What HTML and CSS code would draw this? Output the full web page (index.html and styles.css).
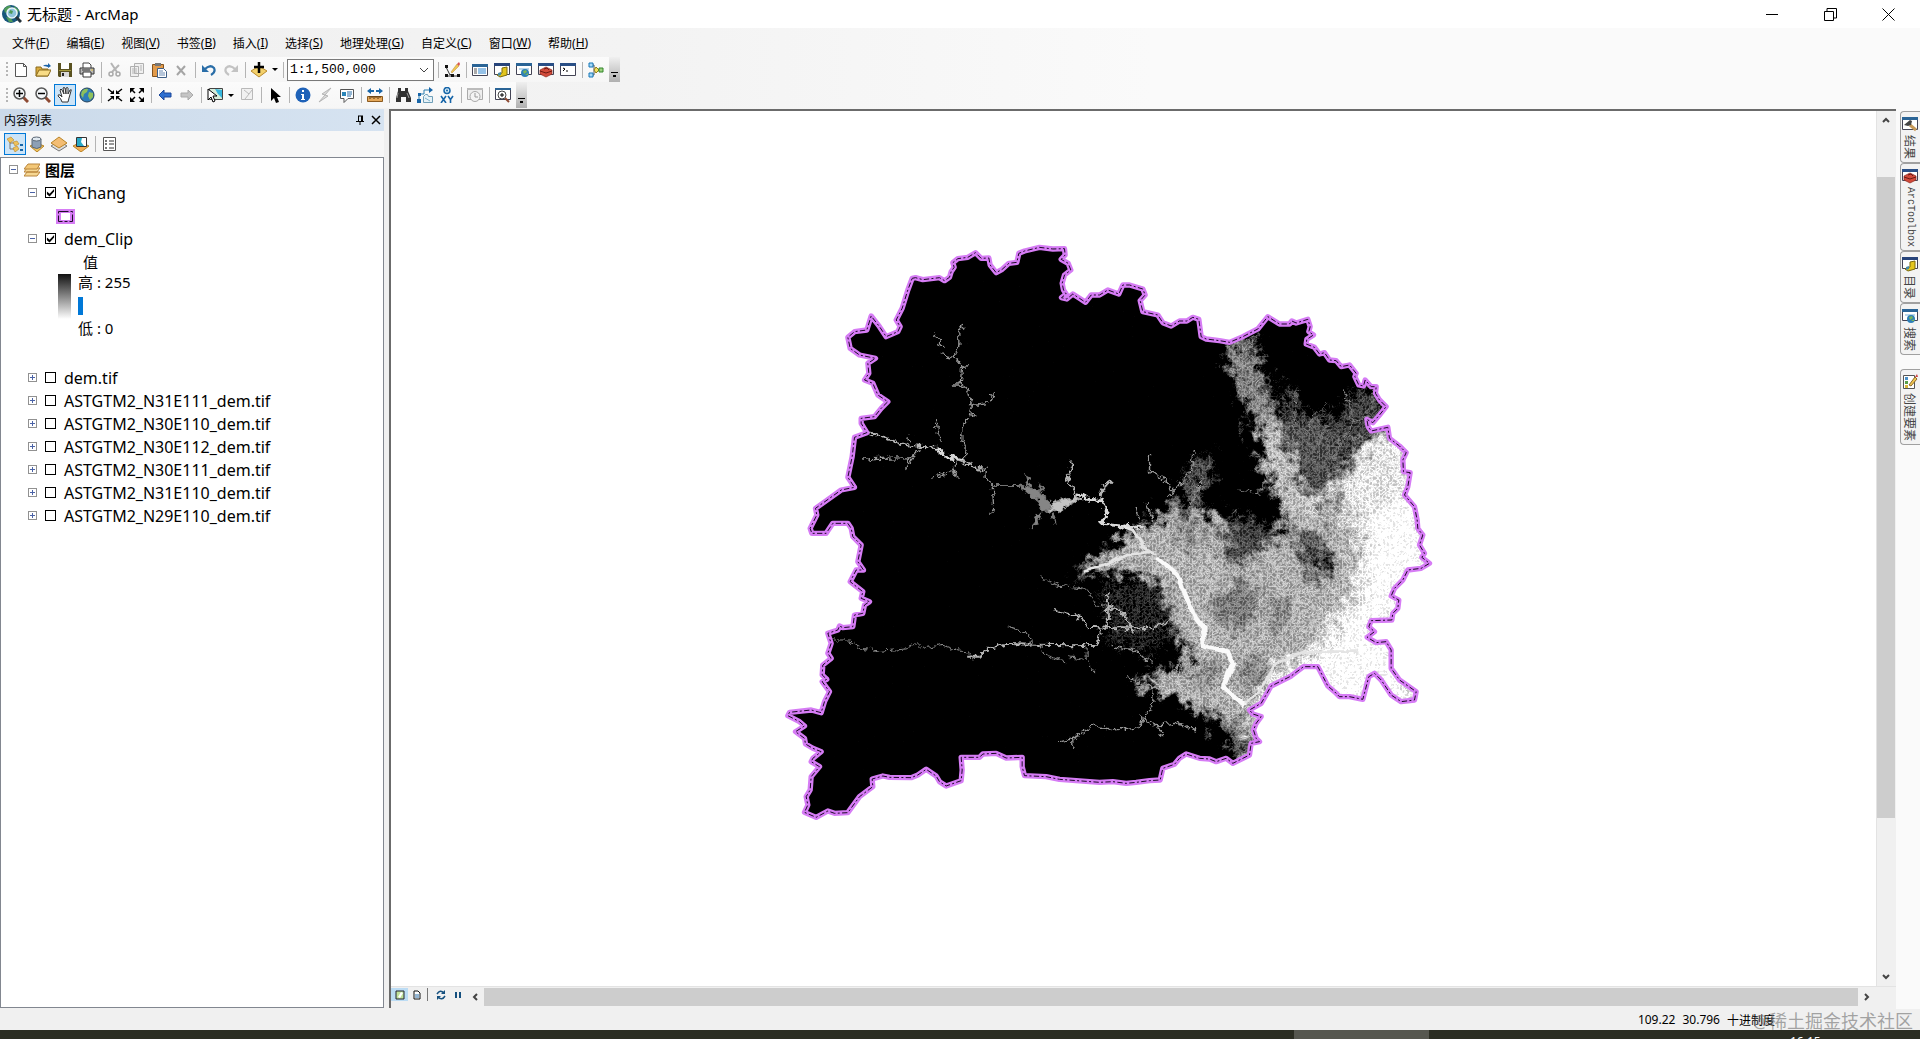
FILE: index.html
```html
<!DOCTYPE html>
<html lang="zh-CN">
<head>
  <meta charset="UTF-8">
  <meta name="viewport" content="width=device-width, initial-scale=1.0">
  <title>无标题 - ArcMap</title>
  <link rel="stylesheet" href="styles.css">
</head>
<body>

  <!-- 图标库 -->
  <svg class="icon-defs" aria-hidden="true">
    <symbol id="i-logo" viewBox="0 0 20 20">
      <circle cx="9" cy="10" r="9" fill="#17567c"/>
      <path d="M2 5Q5 1 9 2L7 6 3 9zM12 2l5 4-2 5-3-3zM4 13l5 1 2 4-4 0z" fill="#4f9a58"/>
      <circle cx="10" cy="9" r="5" fill="#8fc4dc" stroke="#e9f3f8" stroke-width="1.500"/>
      <path d="M8 6l3 1-1 3-3-1z" fill="#4f9a58"/>
      <path d="M14 13l5 5" stroke="#27343c" stroke-width="3"/>
    </symbol>
    <symbol id="i-new" viewBox="0 0 16 16"><path d="M2.500 1.500h8l3 3v10h-11z" fill="#fff" stroke="#555"/><path d="M10.500 1.500v3h3" fill="none" stroke="#555"/></symbol>
    <symbol id="i-open" viewBox="0 0 16 16"><path d="M1 14V5h5l1 2h6v7z" fill="#d9ab3f" stroke="#8a6a1c"/><path d="M1 14l3-6h12l-3 6z" fill="#f8dc86" stroke="#8a6a1c"/><path d="M8 4q2-2 5-1V1l3 3-3 2V5Q10 4 8 4z" fill="#1c63a8"/></symbol>
    <symbol id="i-save" viewBox="0 0 16 16"><path d="M1 1h14v14H2l-1-1z" fill="#5a5220"/><path d="M4 1h8v6H4z" fill="#fff"/><path d="M2 8h12v1H2z" fill="#a39a3f"/><path d="M4 10h8v5H4z" fill="#d8d8d8"/><path d="M5 11h2v3H5z" fill="#222"/></symbol>
    <symbol id="i-print" viewBox="0 0 16 16"><path d="M4 6V1h6l2 2v3" fill="#fff" stroke="#444"/><path d="M1 6h14v6H1z" fill="#b9b9b9" stroke="#333"/><path d="M4 10h8v5H4z" fill="#fff" stroke="#333"/><path d="M3 8h8" stroke="#333"/><path d="M12 8h2" stroke="#e4c23a"/></symbol>
    <symbol id="i-cut" viewBox="0 0 16 16"><path d="M4 1l6 9M12 3L5 10" stroke="#b5b5b5" stroke-width="2"/><circle cx="4" cy="12" r="2" fill="none" stroke="#aaa" stroke-width="1.500"/><circle cx="11" cy="12" r="2" fill="none" stroke="#aaa" stroke-width="1.500"/></symbol>
    <symbol id="i-copy" viewBox="0 0 16 16"><path d="M5.500 1.500h9v10h-9zM1.500 4.500h8v10h-8z" fill="#f0f0f0" stroke="#b0b0b0"/><path d="M3 7h5M3 9h5M3 11h5M11 4h2M11 6h2M11 8h2" stroke="#b5b5b5"/></symbol>
    <symbol id="i-paste" viewBox="0 0 16 16"><path d="M1.500 2.500h11v12h-11z" fill="#e29b4b" stroke="#82521e"/><path d="M4 1h6v3H4z" fill="#777"/><path d="M6.500 6.500h6l3 3v6h-9z" fill="#fff" stroke="#3f5f87"/><path d="M8 9h4M8 11h6M8 13h6" stroke="#6d8cb4"/></symbol>
    <symbol id="i-delete" viewBox="0 0 16 16"><path d="M4 4l8 9M12 4l-8 9" stroke="#a5a5a5" stroke-width="2"/></symbol>
    <symbol id="i-undo" viewBox="0 0 16 16"><path d="M4 7q5-5 9-1 2 4-3 7" fill="none" stroke="#2a6ea8" stroke-width="2.200"/><path d="M1 3v7h7z" fill="#2a6ea8"/></symbol>
    <symbol id="i-redo" viewBox="0 0 16 16"><path d="M12 7Q7 2 3 6q-2 4 3 7" fill="none" stroke="#c3c3c3" stroke-width="2.200"/><path d="M15 3v7H8z" fill="#c3c3c3"/></symbol>
    <symbol id="i-add" viewBox="0 0 16 16"><path d="M0 9l8-5 8 5-8 6z" fill="#f3d06b" stroke="#b98a2c"/><path d="M8 0v11M3 5h10" stroke="#000" stroke-width="2.500"/></symbol>
    <symbol id="i-editor" viewBox="0 0 16 16"><path d="M2 5l4 8 1-1M2 14h12" stroke="#333" fill="none"/><path d="M1 3h3v3H1zM1 12h3v3H1zM7 12h3v3H7zM13 12h3v3h-3z" fill="#111"/><path d="M7 10l6-8 2 2-7 7z" fill="#f1c651" stroke="#b58a3b" stroke-width=".5"/><path d="M13 2l2-2 1 2-1 2z" fill="#d9534f"/></symbol>
    <symbol id="i-table" viewBox="0 0 16 16"><path d="M.5 2.500h15v11H.5z" fill="#fff" stroke="#445"/><path d="M0 2h16v3H0z" fill="#2a6496"/><path d="M2 7h3M2 9h3M2 11h3" stroke="#555"/><path d="M6 7h8M6 9h8M6 11h8" stroke="#2c85d0"/></symbol>
    <symbol id="i-catalog" viewBox="0 0 16 16"><path d="M.5 1.500h15v11H.5z" fill="#fff" stroke="#445"/><path d="M0 1h16v3H0z" fill="#27447b"/><path d="M8 6l5-1v8l-7 2-3-2 5-2z" fill="#e3c51d" stroke="#7c6b0c"/><path d="M4 11l3-1v3l-3 1z" fill="#4b8ca8"/></symbol>
    <symbol id="i-search" viewBox="0 0 16 16"><path d="M.5 1.500h15v11H.5z" fill="#fff" stroke="#445"/><path d="M0 1h16v3H0z" fill="#2a6496"/><path d="M3 6h10v2H3z" fill="#b9d7ea"/><circle cx="9" cy="11" r="4" fill="#2d7fb8"/><path d="M7 9l3-1 1 2-3 2zM9 13l3-2v2z" fill="#79b557"/></symbol>
    <symbol id="i-toolbox" viewBox="0 0 16 16"><path d="M.5 1.500h15v11H.5z" fill="#fff" stroke="#445"/><path d="M0 1h16v3H0z" fill="#2a4f86"/><path d="M2 8l6-3 6 3v4l-6 3-6-3z" fill="#d24a3a" stroke="#8c2a20" stroke-width=".7"/><path d="M2 9l6 2 6-2M6 7l3-1 2 2" stroke="#6e1a12" fill="none"/></symbol>
    <symbol id="i-python" viewBox="0 0 16 16"><path d="M.5 1.500h15v12H.5z" fill="#fff" stroke="#445"/><path d="M0 1h16v3H0z" fill="#2a4f86"/><path d="M3 6l2 1-2 2M6 9h2" stroke="#000" fill="none"/></symbol>
    <symbol id="i-model" viewBox="0 0 16 16"><path d="M3 3h3v10H3M6 8h6" stroke="#555" fill="none"/><path d="M1 1h4v4H1zM1 11h4v4H1z" fill="#a8d9f6" stroke="#1576b8"/><path d="M8 5l3 3-3 3-2-3z" fill="#f2df5e" stroke="#927f15"/><path d="M11 6h4v4h-4z" fill="#9bd27e" stroke="#33852a"/></symbol>
    <symbol id="i-zoomin" viewBox="0 0 16 16"><path d="M10 10l5 5" stroke="#8e4a33" stroke-width="3"/><circle cx="6.500" cy="6.500" r="5.500" fill="#f5f8fa" stroke="#555" stroke-width="1.500"/><path d="M6.500 3v7M3 6.500h7" stroke="#000" stroke-width="1.500"/></symbol>
    <symbol id="i-zoomout" viewBox="0 0 16 16"><path d="M10 10l5 5" stroke="#8e4a33" stroke-width="3"/><circle cx="6.500" cy="6.500" r="5.500" fill="#f5f8fa" stroke="#555" stroke-width="1.500"/><path d="M3 6.500h7" stroke="#000" stroke-width="1.500"/></symbol>
    <symbol id="i-hand" viewBox="0 0 16 16"><path d="M5 15Q4 11 1 9q0-2 2-1l2 2L3 3q1-2 2 0l2 4-1-6q1-1 2 0l1 6V1q2-1 2 0v6l2-4q2-1 1 1l-2 7-1 4z" fill="#fff" stroke="#333"/></symbol>
    <symbol id="i-globe" viewBox="0 0 16 16"><circle cx="8" cy="8" r="7" fill="#2e7cb8" stroke="#23405c"/><path d="M3 4q3-3 6-2l-1 3-3 2-1 4-2-3zM10 5l4 1v4l-3 3-2-4z" fill="#8ec05b"/></symbol>
    <symbol id="i-fixin" viewBox="0 0 16 16"><path d="M1 2l5 4M15 2l-5 4M1 14l5-4M15 14l-5-4" stroke="#000" stroke-width="1.500"/><path d="M7 3v4H3zM9 3v4h4zM7 13V9H3zM9 13V9h4z"/></symbol>
    <symbol id="i-fixout" viewBox="0 0 16 16"><path d="M2 2l4 4M14 2l-4 4M2 14l4-4M14 14l-4-4" stroke="#000" stroke-width="1.500"/><path d="M1 1h5L1 6zM15 1h-5l5 5zM1 15h5l-5-5zM15 15h-5l5-5z"/></symbol>
    <symbol id="i-back" viewBox="0 0 16 16"><path d="M2 8l5-5v3h7v4H7v3z" fill="#2e6fd0" stroke="#1b479a"/></symbol>
    <symbol id="i-forward" viewBox="0 0 16 16"><path d="M14 8L9 3v3H2v4h7v3z" fill="#c5c5c5" stroke="#aaa"/></symbol>
    <symbol id="i-select" viewBox="0 0 16 16"><path d="M2.500 1.500h13v11h-13z" fill="#d6ecd9" stroke="#444"/><path d="M8 2l7 1v8l-4-4z" fill="#35b6dd"/><path d="M1 2v11l3-3 2 5 2-1-2-5h4z" fill="#fff" stroke="#000"/></symbol>
    <symbol id="i-clear" viewBox="0 0 16 16"><path d="M2.500 1.500h11v11h-11z" fill="#f1f1f1" stroke="#b9b9b9"/><path d="M5 3l5 4-4 5M10 7l3-4" stroke="#bbb" fill="none"/></symbol>
    <symbol id="i-arrow" viewBox="0 0 16 16"><path d="M4 1v13l3-3 2 5 3-1-2-5h4z" fill="#000"/></symbol>
    <symbol id="i-info" viewBox="0 0 16 16"><circle cx="8" cy="8" r="7.500" fill="#1f62b8"/><path d="M7 3h2v2H7zM6 7h3v5h1v1H6v-1h1V8H6z" fill="#fff"/></symbol>
    <symbol id="i-flash" viewBox="0 0 16 16"><path d="M14 1L5 7l3 1-6 7 9-6-3-1z" fill="#ddd" stroke="#b5b5b5"/></symbol>
    <symbol id="i-popup" viewBox="0 0 16 16"><path d="M1.500 2.500h13v9H9l-4 4v-4H1.500z" fill="#fff" stroke="#555"/><path d="M3 5h4v4H3z" fill="#2a85b8"/><path d="M8 5h5M8 7h5M8 9h4" stroke="#2a6ea8"/></symbol>
    <symbol id="i-measure" viewBox="0 0 16 16"><path d="M0 4l4-3v2h3v2H4v2zM16 4l-4-3v2H9v2h3v2z" fill="#1765a8"/><path d="M.5 9.500h15v5H.5z" fill="#e5a85a" stroke="#8c5a1e"/><path d="M3 9v3M5 9v2M7 9v3M9 9v2M11 9v3M13 9v2" stroke="#50330e"/></symbol>
    <symbol id="i-find" viewBox="0 0 16 16"><path d="M3 1h3v3h4V1h3v3l3 7v4h-5v-5H6v5H1v-4l2-7z" fill="#333"/><path d="M3 6l-1 5M12 6l2 5" stroke="#999"/></symbol>
    <symbol id="i-route" viewBox="0 0 16 16"><path d="M2 13V7h5V3h6" stroke="#2a7fb0" fill="none"/><path d="M6.500 9.500l2-2h2l1 2h4v6h-9z" stroke="#6f9fb8" fill="#e6f2f8"/><path d="M12 0l4 3-4 3zM0 12h4v4H0zM1 6h3v3H1z" fill="#1765a8"/><path d="M8 11l5 3" stroke="#7fb3cf"/></symbol>
    <symbol id="i-goxy" viewBox="0 0 16 16"><circle cx="8" cy="3.500" r="3" fill="#d7ecf6" stroke="#1765a8" stroke-width="1.500"/><circle cx="8" cy="3.500" r="1" fill="#1765a8"/><path d="M2 9l5 7M7 9l-5 7M9 9l2.500 3.500M14 9l-2.500 3.500V16" stroke="#1765a8" stroke-width="1.600" fill="none"/></symbol>
    <symbol id="i-time" viewBox="0 0 16 16"><path d="M.5 1.500h15v11H.5z" fill="#eee" stroke="#aaa"/><path d="M0 1h16v2H0z" fill="#bbb"/><circle cx="8" cy="9.500" r="5" fill="#f4f4f4" stroke="#aaa"/><path d="M8 6v4h3" stroke="#999" fill="none"/></symbol>
    <symbol id="i-viewer" viewBox="0 0 16 16"><path d="M.5 1.500h15v11H.5z" fill="#fff" stroke="#445"/><path d="M0 1h16v2H0z" fill="#2a6496"/><path d="M10 11l4 4" stroke="#8e4a33" stroke-width="2"/><circle cx="7" cy="8" r="4" fill="#fff" stroke="#444"/><path d="M7 6v4M5 8h4" stroke="#000"/></symbol>
    <symbol id="i-bylist" viewBox="0 0 16 16"><path d="M3 4v9h6M3 7h5" stroke="#777" fill="none"/><path d="M0 3l4-2 3 3-4 3zM6 6l4-1 2 3-4 2zM6 12l4-2 2 3-4 3z" fill="#efc25b" stroke="#b88427" stroke-width=".6"/><path d="M13 9h3M13 14h3" stroke="#1765a8" stroke-width="2"/></symbol>
    <symbol id="i-bysource" viewBox="0 0 16 16"><path d="M1 10l7-3 7 3-7 6z" fill="#efc25b" stroke="#b88427"/><path d="M3 3v8q5 3 9 0V3z" fill="#8da0b5" stroke="#5b6876"/><ellipse cx="7.500" cy="3" rx="4.500" ry="2" fill="#dfe8f0" stroke="#5b6876"/></symbol>
    <symbol id="i-byvis" viewBox="0 0 16 16"><path d="M0 10l8-5 8 5-8 5z" fill="#ddd" stroke="#777"/><path d="M0 7l8-6 8 6-8 5z" fill="#f3bd74" stroke="#b88427"/></symbol>
    <symbol id="i-bysel" viewBox="0 0 16 16"><path d="M0 10l8-4 8 4-8 6z" fill="#f0ae55" stroke="#b88427"/><path d="M3.500 1.500h10v9h-10z" fill="#fff" stroke="#333"/><path d="M4 2h5l-1 4 3 4H4z" fill="#28a9c6"/></symbol>
    <symbol id="i-options" viewBox="0 0 16 16"><path d="M2.500 1.500h12v13h-12z" fill="#fff" stroke="#555"/><path d="M4 4h2v2H4zM4 7h2v2H4zM4 11h2v2H4z" fill="#777"/><path d="M8 5h5M8 8h5M8 12h5" stroke="#333"/></symbol>
    <symbol id="i-layers" viewBox="0 0 16 16"><path d="M0 14l3-4h13l-3 4zM0 10l3-4h13l-3 4z" fill="#f6d793" stroke="#b9853c"/><path d="M0 7l4-5h12l-3 5z" fill="#f3c777" stroke="#b9853c"/></symbol>
    <symbol id="i-results" viewBox="0 0 16 16"><path d="M.5 1.500h15v12H.5z" fill="#fff" stroke="#445"/><path d="M0 1h16v3H0z" fill="#2a6496"/><path d="M8 9l6 5" stroke="#c79a58" stroke-width="3"/><path d="M2 9l6-5 2 1-1 4-3 1z" fill="#444"/></symbol>
    <symbol id="i-create" viewBox="0 0 16 16"><path d="M1.500 1.500h11v13h-11z" fill="#fff" stroke="#555"/><path d="M3 3h3v3H3z" fill="#4a90c8"/><path d="M3 7h3v3H3z" fill="#5aa04a"/><path d="M3 11h3v3H3z" fill="#d8b63a"/><path d="M7 11l6-8 2 2-6 7z" fill="#f1c651" stroke="#8d6a2b"/><path d="M13 3l2-3 1 3z" fill="#c44"/></symbol>
    <symbol id="i-pin" viewBox="0 0 10 10"><path d="M3 1h5M3.500 1v5M6.500 1v5M7.500 1v5M1 6.500h8M5 6v4" stroke="#000" fill="none"/></symbol>
    <symbol id="i-close" viewBox="0 0 10 10"><path d="M1 1l8 8M9 1l-8 8" stroke="#000" stroke-width="1.500"/></symbol>
    <symbol id="i-chev" viewBox="0 0 10 10"><path d="M2 7l3-3 3 3" stroke="#444" stroke-width="2" fill="none"/></symbol>
    <symbol id="i-dataview" viewBox="0 0 10 10"><path d="M1 1h8v8H1z" fill="#bfe09a" stroke="#223"/><path d="M3 7l3-5 2 1-3 5z" fill="#fff"/></symbol>
    <symbol id="i-layview" viewBox="0 0 10 10"><path d="M2 1h4l2 2v6H2z" fill="#fff" stroke="#111"/><path d="M3 5h4M3 7h4" stroke="#2a6ea8"/></symbol>
    <symbol id="i-refresh" viewBox="0 0 10 10"><path d="M1 4q3-5 7-1M9 6q-3 5-7 1" stroke="#15507f" stroke-width="1.500" fill="none"/><path d="M9 0v4H5zM1 10V6h4z" fill="#15507f"/></symbol>
    <symbol id="i-pause" viewBox="0 0 10 10"><path d="M2 2h2v6H2zM6 2h2v6H6z" fill="#15507f"/></symbol>
  </svg>

  <!-- 标题栏 -->
  <header class="titlebar">
    <svg class="logo"><use href="#i-logo"/></svg>
    <h1>无标题 - ArcMap</h1>
    <div class="win-buttons">
      <button aria-label="最小化"><svg viewBox="0 0 13 13"><path d="M0 6.500h12"/></svg></button>
      <button aria-label="还原"><svg viewBox="0 0 13 13"><path d="M.5 3.500h9v9h-9zM3 3V.5h9.500v9.500H10"/></svg></button>
      <button aria-label="关闭"><svg viewBox="0 0 13 13"><path d="M.5.5l12 12M12.500.5l-12 12"/></svg></button>
    </div>
  </header>

  <div class="bars">
    <nav class="menubar">
      <button>文件(<u>F</u>)</button>
      <button>编辑(<u>E</u>)</button>
      <button>视图(<u>V</u>)</button>
      <button>书签(<u>B</u>)</button>
      <button>插入(<u>I</u>)</button>
      <button>选择(<u>S</u>)</button>
      <button>地理处理(<u>G</u>)</button>
      <button>自定义(<u>C</u>)</button>
      <button>窗口(<u>W</u>)</button>
      <button>帮助(<u>H</u>)</button>
    </nav>

    <!-- 标准工具条 -->
    <div class="toolbar">
      <button class="tool" aria-label="新建"><svg><use href="#i-new"/></svg></button>
      <button class="tool" aria-label="打开"><svg><use href="#i-open"/></svg></button>
      <button class="tool" aria-label="保存"><svg><use href="#i-save"/></svg></button>
      <button class="tool" aria-label="打印"><svg><use href="#i-print"/></svg></button>
      <span class="sep"></span>
      <button class="tool" aria-label="剪切"><svg><use href="#i-cut"/></svg></button>
      <button class="tool" aria-label="复制"><svg><use href="#i-copy"/></svg></button>
      <button class="tool" aria-label="粘贴"><svg><use href="#i-paste"/></svg></button>
      <button class="tool" aria-label="删除"><svg><use href="#i-delete"/></svg></button>
      <span class="sep"></span>
      <button class="tool" aria-label="撤销"><svg><use href="#i-undo"/></svg></button>
      <button class="tool" aria-label="恢复"><svg><use href="#i-redo"/></svg></button>
      <span class="sep"></span>
      <button class="tool" aria-label="添加数据"><svg><use href="#i-add"/></svg></button>
      <button class="caret" aria-label="添加数据菜单"></button>
      <span class="sep"></span>
      <span class="scale">
        <select aria-label="地图比例"><option>1:1,500,000</option></select>
        <svg viewBox="0 0 10 10"><path d="M1 3l4 4 4-4"/></svg>
      </span>
      <span class="sep"></span>
      <button class="tool" aria-label="编辑器"><svg><use href="#i-editor"/></svg></button>
      <span class="sep"></span>
      <button class="tool" aria-label="内容列表"><svg><use href="#i-table"/></svg></button>
      <button class="tool" aria-label="目录"><svg><use href="#i-catalog"/></svg></button>
      <button class="tool" aria-label="搜索"><svg><use href="#i-search"/></svg></button>
      <button class="tool" aria-label="ArcToolbox"><svg><use href="#i-toolbox"/></svg></button>
      <button class="tool" aria-label="Python"><svg><use href="#i-python"/></svg></button>
      <span class="sep"></span>
      <button class="tool" aria-label="模型构建器"><svg><use href="#i-model"/></svg></button>
      <button class="more" aria-label="更多"></button>
    </div>

    <!-- 基础工具条 -->
    <div class="toolbar">
      <button class="tool" aria-label="放大"><svg><use href="#i-zoomin"/></svg></button>
      <button class="tool" aria-label="缩小"><svg><use href="#i-zoomout"/></svg></button>
      <button class="tool active" aria-label="平移"><svg><use href="#i-hand"/></svg></button>
      <button class="tool" aria-label="全图"><svg><use href="#i-globe"/></svg></button>
      <span class="sep"></span>
      <button class="tool" aria-label="固定比例放大"><svg><use href="#i-fixin"/></svg></button>
      <button class="tool" aria-label="固定比例缩小"><svg><use href="#i-fixout"/></svg></button>
      <span class="sep"></span>
      <button class="tool" aria-label="后退"><svg><use href="#i-back"/></svg></button>
      <button class="tool" aria-label="前进"><svg><use href="#i-forward"/></svg></button>
      <span class="sep"></span>
      <button class="tool" aria-label="选择要素"><svg><use href="#i-select"/></svg></button>
      <button class="caret" aria-label="选择菜单"></button>
      <button class="tool" aria-label="清除所选"><svg><use href="#i-clear"/></svg></button>
      <span class="sep"></span>
      <button class="tool" aria-label="选择元素"><svg><use href="#i-arrow"/></svg></button>
      <span class="sep"></span>
      <button class="tool" aria-label="识别"><svg><use href="#i-info"/></svg></button>
      <button class="tool" aria-label="超链接"><svg><use href="#i-flash"/></svg></button>
      <button class="tool" aria-label="弹出窗口"><svg><use href="#i-popup"/></svg></button>
      <span class="sep"></span>
      <button class="tool" aria-label="测量"><svg><use href="#i-measure"/></svg></button>
      <span class="sep"></span>
      <button class="tool" aria-label="查找"><svg><use href="#i-find"/></svg></button>
      <button class="tool" aria-label="查找路径"><svg><use href="#i-route"/></svg></button>
      <button class="tool" aria-label="转到 XY"><svg><use href="#i-goxy"/></svg></button>
      <span class="sep"></span>
      <button class="tool" aria-label="时间滑块"><svg><use href="#i-time"/></svg></button>
      <span class="sep"></span>
      <button class="tool" aria-label="查看器"><svg><use href="#i-viewer"/></svg></button>
      <button class="more" aria-label="更多"></button>
    </div>
  </div>

  <main class="workspace">
    <!-- 内容列表 -->
    <aside class="toc">
      <div class="toc-head">
        <h2>内容列表</h2>
        <button aria-label="自动隐藏"><svg><use href="#i-pin"/></svg></button>
        <button aria-label="关闭"><svg><use href="#i-close"/></svg></button>
      </div>
      <div class="toc-tools">
        <button class="tool active" aria-label="按绘制顺序列出"><svg><use href="#i-bylist"/></svg></button>
        <button class="tool" aria-label="按源列出"><svg><use href="#i-bysource"/></svg></button>
        <button class="tool" aria-label="按可见性列出"><svg><use href="#i-byvis"/></svg></button>
        <button class="tool" aria-label="按选择列出"><svg><use href="#i-bysel"/></svg></button>
        <span class="sep"></span>
        <button class="tool" aria-label="选项"><svg><use href="#i-options"/></svg></button>
      </div>
      <div class="tree">
        <div class="row root"><button class="exp" aria-label="折叠"></button><svg><use href="#i-layers"/></svg><strong>图层</strong></div>
        <div class="row"><button class="exp" aria-label="折叠"></button><label><input type="checkbox" checked>YiChang</label></div>
        <div class="row symbol"><svg viewBox="0 0 19 15"><path d="M0 0h19v15H0z" fill="#d67cf5"/><path d="M5 4h9v7H5z" fill="#fff"/><path d="M2.500 2.500h14v10h-14z" fill="none" stroke="#201028" stroke-dasharray="10 2 3 2"/></svg></div>
        <div class="row"><button class="exp" aria-label="折叠"></button><label><input type="checkbox" checked>dem_Clip</label></div>
        <div class="legend">
          <p class="field">值</p>
          <div class="ramp"></div>
          <div class="stops">
            <p>高 : 255</p>
            <span class="edit-mark"></span>
            <p>低 : 0</p>
          </div>
        </div>
        <div class="row"><button class="exp plus" aria-label="展开"></button><label><input type="checkbox">dem.tif</label></div>
        <div class="row"><button class="exp plus" aria-label="展开"></button><label><input type="checkbox">ASTGTM2_N31E111_dem.tif</label></div>
        <div class="row"><button class="exp plus" aria-label="展开"></button><label><input type="checkbox">ASTGTM2_N30E110_dem.tif</label></div>
        <div class="row"><button class="exp plus" aria-label="展开"></button><label><input type="checkbox">ASTGTM2_N30E112_dem.tif</label></div>
        <div class="row"><button class="exp plus" aria-label="展开"></button><label><input type="checkbox">ASTGTM2_N30E111_dem.tif</label></div>
        <div class="row"><button class="exp plus" aria-label="展开"></button><label><input type="checkbox">ASTGTM2_N31E110_dem.tif</label></div>
        <div class="row"><button class="exp plus" aria-label="展开"></button><label><input type="checkbox">ASTGTM2_N29E110_dem.tif</label></div>
      </div>
    </aside>

    <!-- 地图窗口 -->
    <section class="map">
      <div class="canvas">
        <svg viewBox="392 111 1484 875" role="img" aria-label="dem_Clip">
          <defs>
            <path id="border" d="M398 145L408 143 430 149 455 146 480 143 495 152 510 142 515 125 524 112 520 98 535 86 565 82 588 68 605 85 628 84 632 105 650 128 668 118 688 100 712 97 718 70 735 63 780 52 820 57 855 56 857 75 845 88 866 100 874 120 855 135 848 160 852 180 860 192 846 203 862 207 880 192 900 205 918 217 935 195 960 195 985 180
              1018 192 1030 165 1050 165 1090 177 1097 195 1082 212 1090 245 1135 255 1150 278 1175 288 1200 273 1222 273 1240 262 1258 268 1265 320 1280 327 1320 332 1350 337 1390 320 1435 297 1465 260 1500 282 1530 282 1537 273 1550 279 1585 268 1592 290 1588 305 1602 315 1582 328 1580 342 1605 352 1620 372 1635 368 1650 390 1670 392 1685 410 1710 405 1730 430 1726 440 1738 465 1752 468 1757 450 1775 470 1790 470 1788 490 1800 510 1820 530 1800 555 1780 578 1762 568 1766 590 1775 603 1825 592 1830 625 1860 648 1880 668 1870 690 1872 725 1892 728 1885 770 1875 795 1905 830 1913 870 1915 895
              1922 905 1930 915 1920 945 1935 970 1927 982 1950 1000 1925 1015 1885 1020 1870 1050 1845 1075 1835 1098 1858 1110 1855 1135 1840 1150 1837 1170 1775 1172 1768 1190 1785 1205 1763 1222 1790 1238 1820 1235 1835 1260 1835 1315 1860 1350 1910 1385 1905 1410 1865 1415 1835 1395 1805 1350 1785 1330 1768 1340 1750 1408 1710 1400 1680 1400 1665 1385 1645 1368 1615 1310 1572 1310 1535 1338 1475 1368 1445 1420 1410 1440 1420 1452 1445 1460 1430 1480 1422 1500 1430 1525 1440 1535 1415 1540 1410 1575 1360 1600 1340 1585 1310 1595 1290 1587 1260 1585 1220 1572 1200 1585 1185 1603 1150 1615 1142 1650 1110 1652 1070 1657 1040 1660 1000 1655
              960 1657 840 1648 800 1640 735 1637 728 1610 728 1582 680 1584 650 1570 610 1572 600 1582 545 1582 548 1620 545 1652 500 1668 480 1655 470 1638 440 1618 415 1635 395 1643 330 1642 310 1638 278 1647 280 1670 240 1700 205 1748 165 1750 145 1743 110 1762 75 1747 85 1725 80 1700 92 1680 95 1640 120 1610 95 1595 100 1585 125 1565 100 1555 78 1542 75 1525 48 1505 75 1488 60 1475 25 1457 30 1447 95 1440 125 1448 135 1415 150 1385 128 1355 142 1348 128 1335 130 1305 155 1285 145 1270 155 1240 145 1210 175 1200 180 1188 190 1193 220 1190 225 1155 250 1150 255 1125 270 1115 245 1105 250 1085 212 1055 230 1020 252 1020 235 995 245 945 220 920 215 895
              205 880 160 880 140 910 97 910 92 895 112 855 108 835 150 805 185 780 225 772 205 742 218 680 225 622 262 608 245 580 245 565 285 560 305 535 325 515 295 495 280 460 255 450 268 430 265 400 288 385 240 375 212 355 205 322 225 305 262 300 275 258 300 290 320 320 355 305 362 290 350 270 368 235 385 180z"/>
            <clipPath id="cut"><use href="#border"/></clipPath>
            <!-- 地形：位移 + 脊状噪声 -->
            <filter id="terrain" filterUnits="userSpaceOnUse" x="0" y="0" width="2000" height="1800" color-interpolation-filters="sRGB">
              <feGaussianBlur in="SourceGraphic" stdDeviation="14" result="soft"/>
              <feTurbulence type="fractalNoise" baseFrequency=".03" numOctaves="5" seed="4" result="warp"/>
              <feDisplacementMap in="soft" in2="warp" scale="120" xChannelSelector="R" yChannelSelector="G" result="bent"/>
              <feTurbulence type="turbulence" baseFrequency=".1" numOctaves="3" seed="9"/>
              <feColorMatrix values="-2 0 0 0 1  -2 0 0 0 1  -2 0 0 0 1  0 0 0 0 1" result="veins"/>
              <feComposite in="bent" in2="veins" operator="arithmetic" k1="0" k2="1.250" k3=".35" k4="-.33"/>
            </filter>
            <filter id="rough" filterUnits="userSpaceOnUse" x="0" y="0" width="2000" height="1800">
              <feTurbulence type="fractalNoise" baseFrequency=".06" numOctaves="3" seed="2"/>
              <feDisplacementMap in="SourceGraphic" scale="26" xChannelSelector="R" yChannelSelector="G"/>
            </filter>
            <filter id="bend" filterUnits="userSpaceOnUse" x="0" y="0" width="2000" height="1800">
              <feTurbulence type="fractalNoise" baseFrequency=".02" numOctaves="2" seed="5"/>
              <feDisplacementMap in="SourceGraphic" scale="24" xChannelSelector="R" yChannelSelector="G"/>
            </filter>
          </defs>

          <g transform="translate(780 230) scale(.33333)">
            <g clip-path="url(#cut)">
              <g filter="url(#terrain)">
                <path d="M0 0h2000v1800H0z" fill="#000"/>
                <path d="M1345 330L1410 330 1450 430 1490 540 1530 640 1560 740 1600 790 1650 760 1700 690 1760 600 1790 560 2000 560 2000 1800 1400 1800 1400 1590 1340 1530 1300 1470 1200 1410 1070 1370 1060 1340 1200 1310 1230 1280 1190 1230 1180 1150 1130 1060 1080 1030 990 1020 860 1040 1000 945 1120 870 1190 820 1290 850 1400 870 1470 900 1510 900 1500 830 1450 720 1430 620 1390 500 1350 420z" fill="#b2b2b2"/>
                <path d="M1340 320L1420 320 1480 500 1460 600 1420 560 1355 430z" fill="#8f8f8f"/>
                <path d="M1460 560l50 40 50 160 40 60-50 60-50-60-50-130z" fill="#bcbcbc"/>
                <path d="M1170 850l40-60 40-110 30-30 20 70-30 90-50 50z" fill="#6a6a6a"/>
                <path d="M1700 760L1780 620 2000 620 2000 1800 1500 1800 1420 1450 1460 1350 1600 1250 1700 1100 1740 950 1700 850 1560 830z" fill="#dedede"/>
                <path d="M1780 850L1900 800 1960 1000 1820 1200 1900 1440 1600 1420 1500 1330 1640 1280 1760 1100z" fill="#fafafa"/>
                <path d="M1505 470l25-10 20 60 10 130-30 20zM1560 540l60 10 60 60 20 60-60 90-50 20-40-90z" fill="#686868"/>
                <path d="M1700 500l80-40 60 40-30 100-110 60-60-60z" fill="#555"/>
                <path d="M1360 850l60 20 90 40-60 40-80 60-40-40z" fill="#5c5c5c"/>
                <path d="M1180 900l60-20 40 40-50 50z" fill="#808080"/>
                <path d="M1300 1090l70-40 60 0 0 120-60 50-60-60z" fill="#858585"/>
                <path d="M1530 900l80 10 50 60-20 60-60 20-20-80z" fill="#6a6a6a"/>
                <path d="M1600 970l40-10 20 50-40 20z" fill="#2a2a2a"/>
                <path d="M1640 780l60 40-40 20-50-30z" fill="#808080"/>
                <path d="M1470 1110h60v80l-40 30z" fill="#8f8f8f"/>
                <path d="M1380 1290l80-10-20 90-50 20z" fill="#8a8a8a"/>
                <path d="M1220 1310l90-20 30 60-80 30z" fill="#909090"/>
                <path d="M960 1060l160-10 60 110-20 110-180-20z" fill="#3d3d3d"/>
                <path d="M1300 1470l60-10 60 80-20 60-40-20z" fill="#747474"/>
              </g>

              <!-- 河流 -->
              <g class="rivers" filter="url(#rough)">
                <path class="w5" d="M262 608l40 8 40 18 50 14 80 6 30 28 40 12 40 14 30 16"/>
                <path class="w9" d="M470 652l32 28 50 10M800 845l50-20 50-30 20 6"/>
                <path class="w4" d="M555 690l2-40-10-20 0-35 22-35 8-40-12-40-20-15 4-50-24-32-44-10M523 380l15-28 0-40 12-30M487 350l-6-20-20-16M577 522l20 0 30-5 15-25M548 410l20-3M545 465l-28 0M575 548l20 10"/>
                <path class="w4" d="M470 570l4 40 12 25M245 687l60-2 90-2 25-25M395 683l-18 35M392 650l-4-30M530 695l-12 28-30 12-35 10M518 725l25 18M590 712l30 3 0 25 18 28 4 50-8 35M640 768h80"/>
                <path class="gray" d="M720 765l50 12 35 30 10 18-10 20-20 0-10-32-30-25zM785 850l-10 30-20 15 20-45zM735 725l20 40-8 2zM785 765l5 20-10-5zM820 850l6 30-10-20z"/>
                <path class="gray light" d="M805 845l25-30 65-15-5 15-50 25z"/>
                <path class="w5" d="M890 790l-20-30-8-20 18-45M960 812l10-40 25-18"/>
                <path class="w9" d="M910 800l20 8 38 4 15 35-18 35 60 6 70 5"/>
                <path class="w4" d="M1165 800l20-20 50-60 10-60M1180 790l-10-30-60-40 0-45M1080 870l-10-40M1230 830l40-80"/>
                <path class="w3" d="M150 1230l60 0 30 22 60 12 90-8 15-20 20 20 60-12 50 18 30 4 20 22"/>
                <path class="w5" d="M560 1280h45l8-20 60-18M675 1242l100 2 100 2 80-2 5-30 0-20"/>
                <path class="w3" d="M685 1190l60 20 15 40M780 1245l20 30 60 20M920 1245l0 50 30 35M920 1290l-50-10M780 1040l50 25 90 10 30 50 40 5M1380 490l50 15M1380 780l60 10"/>
                <path class="w3" d="M1660 700l20-60 40-60 50-20M1720 580l-10-60-20-40M1740 570l40-40 0-50M1690 620l60 0M1540 660l5-80 5-100M1580 620l20-60 40-40M1610 650l30-60"/>
                <path class="w5" d="M820 1140l80 20 30 30 80 5 100 0 60-20M985 1090l0 100M985 1130l50 20 30 60"/>
                <path class="w4" d="M1120 1380l0 40-40 70-80 10-60-15-60 40-35 10M1080 1460l50 25 60-5 60 20M1130 1480l20 40M880 1520l0 40"/>
                <path class="w4" d="M1200 1300l-20 40-20 30-60 0-60-30M1000 1250l60 10 60 40M1000 940l60-30M1120 870l-20-50"/>
              </g>
              <g filter="url(#bend)">
                <path class="yangtze thin" d="M1030 890l30 10 30 50 40 20"/>
                <path class="yangtze" d="M1130 980l65 55 25 65 20 50 30 40 8 60 67 15 15 35-28 70 68 60"/>
                <path class="yangtze thin" d="M1400 1425l70-85 30-50 100-25 140 0M1120 965l-80 10-60 30-70 20"/>
              </g>
            </g>
            <use href="#border" class="line-halo"/>
            <use href="#border" class="line-dash"/>
          </g>
        </svg>
      </div>
      <div class="vscroll">
        <button aria-label="向上"><svg><use href="#i-chev"/></svg></button>
        <div class="vtrack"><div class="vthumb"></div></div>
        <button class="down" aria-label="向下"><svg><use href="#i-chev"/></svg></button>
      </div>
      <div class="hscroll">
        <button class="view active" aria-label="数据视图"><svg><use href="#i-dataview"/></svg></button>
        <button class="view" aria-label="布局视图"><svg><use href="#i-layview"/></svg></button>
        <span class="sep"></span>
        <button class="view" aria-label="刷新"><svg><use href="#i-refresh"/></svg></button>
        <button class="view" aria-label="暂停绘制"><svg><use href="#i-pause"/></svg></button>
        <button class="left" aria-label="向左"><svg><use href="#i-chev"/></svg></button>
        <div class="hthumb"></div>
        <button class="right" aria-label="向右"><svg><use href="#i-chev"/></svg></button>
      </div>
    </section>

    <!-- 停靠标签 -->
    <aside class="dock">
      <button><svg><use href="#i-results"/></svg>结果</button>
      <button class="mono"><svg><use href="#i-toolbox"/></svg>ArcToolbox</button>
      <button><svg><use href="#i-catalog"/></svg>目录</button>
      <button><svg><use href="#i-search"/></svg>搜索</button>
      <button class="apart"><svg><use href="#i-create"/></svg>创建要素</button>
    </aside>
  </main>

  <footer class="status">
    <span>109.22</span><span>30.796</span><span>十进制度</span>
  </footer>
  <div class="taskbar"><span class="task"></span><time>16:15</time></div>
  <div class="watermark">@稀土掘金技术社区</div>

</body>
</html>
```

FILE: styles.css
```css
* {
  box-sizing: border-box;
}

html, body {
  height: 100%;
  margin: 0;
  overflow: hidden;
}

body {
  display: flex;
  flex-direction: column;
  position: relative;
  background: #f0f0f0;
  color: #000;
  font-family: "Noto Sans", "Noto Sans CJK SC", sans-serif;
  font-size: 12px;
}

button {
  display: flex;
  align-items: center;
  justify-content: center;
  flex: none;
  margin: 0;
  padding: 0;
  border: 0;
  background: none;
  color: inherit;
  font: inherit;
}

h1, h2, p {
  margin: 0;
  font-weight: normal;
}

.icon-defs {
  position: absolute;
  width: 0;
  height: 0;
}

/* 标题栏 */
.titlebar {
  display: flex;
  align-items: center;
  flex: none;
  height: 28px;
  padding-left: 2px;
  background: #fff;
}

.logo {
  width: 20px;
  height: 20px;
}

.titlebar h1 {
  flex: 1;
  margin-left: 5px;
  font-size: 15px;
  line-height: 20px;
}

.win-buttons {
  display: flex;
  padding-right: 3px;
}

.win-buttons button {
  width: 58px;
  height: 28px;
}

.win-buttons svg {
  width: 13px;
  height: 13px;
  fill: none;
  stroke: #000;
}

/* 菜单和工具条 */
.bars {
  flex: none;
  height: 81px;
  background: linear-gradient(90deg, #f0f0f0, #f3f3f3 33%, #fafafa 60%);
}

.menubar {
  display: flex;
  gap: 17px;
  height: 29px;
  padding-left: 12px;
}

.toolbar {
  display: flex;
  align-items: center;
  position: relative;
  width: max-content;
  height: 26px;
  padding-left: 10px;
  background: linear-gradient(#fbfbfb, #f6f6f6);
}

.menubar + .toolbar {
  height: 25px;
}

.toolbar::before {
  content: "";
  width: 2px;
  height: 15px;
  margin: 0 2px 0 -4px;
  background: repeating-linear-gradient(#b5b5b5 0 2px, transparent 2px 4px);
}

.tool {
  width: 22px;
  height: 22px;
  border: 1px solid transparent;
}

.tool svg,
.dock svg,
.row > svg {
  flex: none;
  width: 16px;
  height: 16px;
}

.tool.active {
  border-color: #0078d7;
  background: #cce4f7;
}

.sep {
  flex: none;
  width: 1px;
  height: 16px;
  margin: 0 2px 0 3px;
  background: #b4b4b4;
}

.caret {
  width: 10px;
}

.caret::before {
  content: "";
  border: 3px solid transparent;
  border-top-color: #000;
  border-bottom: 0;
}

.more {
  align-self: stretch;
  align-items: flex-end;
  width: 11px;
  margin-left: 2px;
  padding-bottom: 3px;
  background: linear-gradient(#f0f0f0, #b0b0b0);
}

.more::before {
  content: "";
  width: 7px;
  height: 6px;
  border-top: 1px solid #000;
  background: linear-gradient(#000, #000) center / 3px 2px no-repeat;
}

.scale {
  position: relative;
  width: 147px;
  height: 22px;
  margin: 0 1px;
}

.scale select {
  appearance: none;
  width: 100%;
  height: 100%;
  padding: 0 2px;
  border: 1px solid #7a7a7a;
  border-radius: 0;
  background: #fff;
  color: #000;
  font: 13px "Liberation Mono", monospace;
}

.scale svg {
  position: absolute;
  top: 6px;
  right: 5px;
  width: 10px;
  height: 10px;
  fill: none;
  stroke: #444;
}

/* 主区域 */
.workspace {
  display: flex;
  flex: 1;
  min-height: 0;
}

.toc {
  display: flex;
  flex-direction: column;
  flex: none;
  width: 384px;
  margin-right: 5px;
}

.toc-head {
  display: flex;
  align-items: center;
  height: 22px;
  padding-left: 4px;
  background: linear-gradient(90deg, #cbdaea, #d6e3f1);
}

.toc-head h2 {
  flex: 1;
  font-size: 12px;
}

.toc-head button {
  width: 16px;
  height: 16px;
}

.toc-head svg,
.vscroll svg,
.hscroll svg {
  width: 10px;
  height: 10px;
}

.toc-tools {
  display: flex;
  align-items: center;
  height: 26px;
  padding-left: 4px;
  background: #f7f7f7;
}

.tree {
  flex: 1;
  margin-bottom: 1px;
  border: 1px solid #828790;
  background: #fff;
  font-size: 15px;
}

.row {
  display: flex;
  align-items: center;
  height: 23px;
  padding-left: 27px;
}

.row.root {
  padding-left: 8px;
}

.row.root svg {
  margin: 0 5px 0 6px;
}

.row.symbol {
  padding: 2px 0 0 55px;
}

.row.symbol svg {
  width: 19px;
  height: 15px;
}

.exp {
  width: 9px;
  height: 9px;
  border: 1px solid #919191;
  background: linear-gradient(#4b63a7, #4b63a7) center / 5px 1px no-repeat;
}

.exp.plus {
  background: linear-gradient(#4b63a7, #4b63a7) center / 5px 1px no-repeat, linear-gradient(#4b63a7, #4b63a7) center / 1px 5px no-repeat;
}

.row label {
  display: flex;
  align-items: center;
  margin-left: 8px;
  font-size: 16px;
  line-height: 22px;
}

.row input {
  appearance: none;
  display: block;
  width: 11px;
  height: 11px;
  margin: 0 8px 0 0;
  border: 1px solid #000;
}

.row input:checked::before {
  content: "";
  display: block;
  width: 9px;
  height: 9px;
  background: #000;
  clip-path: polygon(10% 40%, 40% 65%, 90% 10%, 90% 40%, 40% 95%, 10% 70%);
}

.legend {
  display: grid;
  grid-template-columns: 13px 1fr;
  grid-template-rows: 23px 1fr;
  column-gap: 7px;
  height: 116px;
  padding-left: 57px;
}

.legend .field {
  grid-column: 2;
  padding-left: 5px;
  line-height: 24px;
}

.ramp {
  height: 45px;
  margin-top: 1px;
  background: linear-gradient(#111, #fff);
}

.stops p {
  line-height: 18px;
}

.edit-mark {
  display: block;
  width: 5px;
  height: 18px;
  margin: 6px 0 4px;
  background: #0078d7;
}

/* 地图 */
.map {
  display: grid;
  grid-template-columns: 1fr 19px;
  grid-template-rows: 1fr 22px;
  flex: 1;
  min-width: 0;
  margin-bottom: 1px;
  border-top: 2px solid #6b6b6b;
  border-left: 2px solid #6b6b6b;
}

.canvas {
  min-width: 0;
  min-height: 0;
  border-right: 1px solid #e3e3e3;
  background: #fff;
}

.canvas svg {
  display: block;
  width: 100%;
  height: 100%;
}

.rivers {
  fill: none;
  stroke: #b4b4b4;
  stroke-linejoin: round;
}

.w3 { stroke-width: 3; stroke: #8a8a8a; }
.w4 { stroke-width: 4; stroke: #999; }
.w5 { stroke-width: 6; }
.w9 { stroke-width: 9; stroke: #d8d8d8; }

.gray {
  fill: #858585;
  stroke: #777;
  stroke-width: 4;
}

.gray.light {
  fill: #c4c4c4;
  stroke: #999;
}

.yangtze {
  fill: none;
  stroke: #fafafa;
  stroke-width: 14;
  stroke-linejoin: round;
}

.yangtze.thin {
  stroke: #e4e4e4;
  stroke-width: 8;
}

.line-halo,
.line-dash {
  fill: none;
  stroke: #d67cf5;
  stroke-width: 16;
  stroke-linejoin: round;
}

.line-dash {
  stroke: #1b0824;
  stroke-width: 3;
  stroke-dasharray: 16 7 6 7;
}

.vscroll {
  display: flex;
  flex-direction: column;
}

.vscroll button {
  width: 18px;
  height: 18px;
}

.down svg {
  transform: rotate(180deg);
}

.vtrack {
  flex: 1;
  padding: 48px 1px 0 0;
}

.vthumb {
  height: 81%;
  background: #cdcdcd;
}

.hscroll {
  display: flex;
  grid-column: 1 / 3;
  padding: 1px 20px 2px 0;
  border-top: 1px solid #e3e3e3;
}

.view {
  width: 17px;
  height: 13px;
}

.view.active {
  background: #bcdcf4;
}

.hscroll .sep {
  height: 13px;
  margin: 0 4px 0 2px;
  background: #777;
}

.left,
.right {
  width: 18px;
  height: 18px;
}

.left svg {
  transform: rotate(-90deg);
}

.right svg {
  transform: rotate(90deg);
}

.hthumb {
  flex: 1;
  background: #cdcdcd;
}

/* 右侧停靠标签 */
.dock {
  flex: none;
  width: 24px;
  padding: 2px 0 0 4px;
  background: #fafafa;
}

.dock button {
  justify-content: flex-start;
  gap: 3px;
  width: 20px;
  height: 52px;
  padding: 4px 2px 0 0;
  border: 1px solid #a0a0a0;
  border-right: 0;
  border-radius: 4px 0 0 4px;
  background: #f3f3f3;
  color: #444;
  font-family: "Noto Sans CJK SC", sans-serif;
  font-size: 12px;
  line-height: 16px;
  writing-mode: vertical-rl;
  text-orientation: sideways;
}

.dock .mono {
  height: 88px;
  font-family: "Liberation Mono", monospace;
  font-size: 10px;
}

.dock .apart {
  height: 76px;
  margin-top: 14px;
}

/* 状态栏 */
.status {
  display: flex;
  align-items: center;
  justify-content: flex-end;
  gap: 7px;
  flex: none;
  height: 21px;
  padding-right: 145px;
}

.taskbar {
  display: flex;
  flex: none;
  justify-content: flex-end;
  height: 9px;
  overflow: hidden;
  background: #2b2d22;
  color: #fff;
}

.task {
  width: 135px;
  margin-right: 361px;
  background: #56574f;
}

.taskbar time {
  width: 130px;
  padding-top: 4px;
  line-height: 16px;
}

.watermark {
  position: absolute;
  right: 7px;
  bottom: 5px;
  color: rgba(110, 110, 110, 0.6);
  font-size: 18px;
  line-height: 26px;
}
```
